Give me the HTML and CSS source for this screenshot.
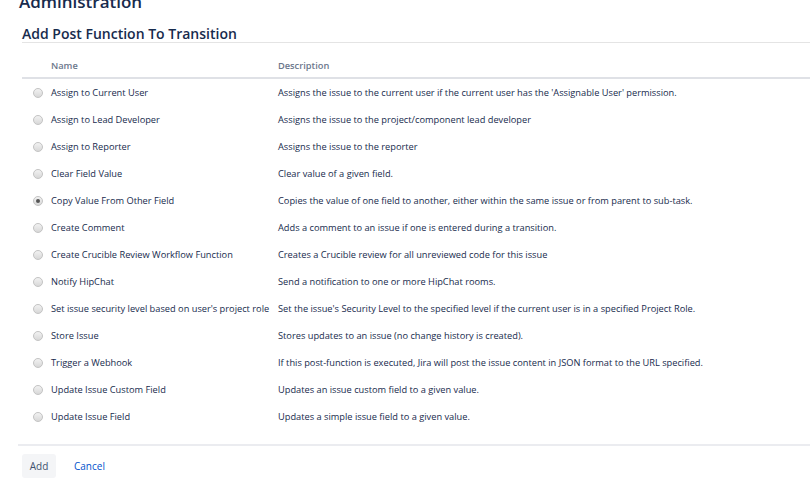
FILE: index.html
```html
<!DOCTYPE html>
<html lang="en">
<head>
    <meta charset="UTF-8">
    <title>Add Post Function To Transition</title>
    <link rel="stylesheet" href="styles.css">
</head>
<body>
    <div class="page">
        <h1 class="page-title">Administration</h1>
        <h2 class="section-title">Add Post Function To Transition</h2>
        <form class="pf-form">
            <table class="pf-table">
                <thead>
                    <tr>
                        <th class="col-radio"></th>
                        <th class="col-name">Name</th>
                        <th class="col-desc">Description</th>
                    </tr>
                </thead>
                <tbody>
                    <tr>
                        <td class="col-radio"><span class="radio"></span></td>
                        <td>Assign to Current User</td>
                        <td>Assigns the issue to the current user if the current user has the 'Assignable User' permission.</td>
                    </tr>
                    <tr>
                        <td class="col-radio"><span class="radio"></span></td>
                        <td>Assign to Lead Developer</td>
                        <td>Assigns the issue to the project/component lead developer</td>
                    </tr>
                    <tr>
                        <td class="col-radio"><span class="radio"></span></td>
                        <td>Assign to Reporter</td>
                        <td>Assigns the issue to the reporter</td>
                    </tr>
                    <tr>
                        <td class="col-radio"><span class="radio"></span></td>
                        <td>Clear Field Value</td>
                        <td>Clear value of a given field.</td>
                    </tr>
                    <tr>
                        <td class="col-radio"><span class="radio checked"></span></td>
                        <td>Copy Value From Other Field</td>
                        <td>Copies the value of one field to another, either within the same issue or from parent to sub-task.</td>
                    </tr>
                    <tr>
                        <td class="col-radio"><span class="radio"></span></td>
                        <td>Create Comment</td>
                        <td>Adds a comment to an issue if one is entered during a transition.</td>
                    </tr>
                    <tr>
                        <td class="col-radio"><span class="radio"></span></td>
                        <td>Create Crucible Review Workflow Function</td>
                        <td>Creates a Crucible review for all unreviewed code for this issue</td>
                    </tr>
                    <tr>
                        <td class="col-radio"><span class="radio"></span></td>
                        <td>Notify HipChat</td>
                        <td>Send a notification to one or more HipChat rooms.</td>
                    </tr>
                    <tr>
                        <td class="col-radio"><span class="radio"></span></td>
                        <td>Set issue security level based on user's project role</td>
                        <td>Set the issue's Security Level to the specified level if the current user is in a specified Project Role.</td>
                    </tr>
                    <tr>
                        <td class="col-radio"><span class="radio"></span></td>
                        <td>Store Issue</td>
                        <td>Stores updates to an issue (no change history is created).</td>
                    </tr>
                    <tr>
                        <td class="col-radio"><span class="radio"></span></td>
                        <td>Trigger a Webhook</td>
                        <td>If this post-function is executed, Jira will post the issue content in JSON format to the URL specified.</td>
                    </tr>
                    <tr>
                        <td class="col-radio"><span class="radio"></span></td>
                        <td>Update Issue Custom Field</td>
                        <td>Updates an issue custom field to a given value.</td>
                    </tr>
                    <tr>
                        <td class="col-radio"><span class="radio"></span></td>
                        <td>Update Issue Field</td>
                        <td>Updates a simple issue field to a given value.</td>
                    </tr>
                </tbody>
            </table>
            <div class="buttons">
                <button type="button" class="btn btn-add">Add</button>
                <a class="btn-cancel" href="#">Cancel</a>
            </div>
        </form>
    </div>
</body>
</html>
```

FILE: styles.css
```css
body {
    margin: 0;
    background: #ffffff;
    font-family: 'Open Sans', sans-serif;
    color: #172b4d;
    overflow: hidden;
}
.page {
    margin-top: -8px;
    padding-left: 18px;
}
.page-title {
    margin: 0 0 0 1px;
    font-size: 17px;
    font-weight: 600;
    line-height: 20px;
    color: #172b4d;
}
.section-title {
    margin: 14px 0 0 4px;
    padding-bottom: 0;
    font-size: 14px;
    font-weight: 600;
    line-height: 16px;
    color: #172b4d;
    border-bottom: 1px solid #e4e4e4;
}
.pf-form {
    margin-top: 11px;
}
.pf-table {
    width: calc(100% - 4px);
    margin-left: 4px;
    border-collapse: collapse;
    font-size: 9.25px;
}
.pf-table th {
    text-align: left;
    font-weight: 600;
    color: #6b778c;
    padding: 6px 0 5px 0;
    line-height: 12px;
    border-bottom: 2px solid #dfe1e6;
}
.pf-table td {
    height: 27px;
    padding: 0;
    color: #172b4d;
    white-space: nowrap;
}
.col-radio {
    width: 29px;
}
.col-name {
    width: 227px;
}
.radio {
    display: block;
    width: 8px;
    height: 8px;
    margin-left: 11px;
    border: 1px solid #c4c4c4;
    border-radius: 50%;
    background: linear-gradient(#f2f2f2, #d8d8d8);
    position: relative;
}
.radio.checked::after {
    content: "";
    position: absolute;
    left: 2px;
    top: 2px;
    width: 4px;
    height: 4px;
    border-radius: 50%;
    background: #555555;
}
.buttons {
    display: flex;
    align-items: center;
    margin-top: 14px;
    padding-top: 8px;
    border-top: 2px solid #ebecf0;
}
.btn {
    font-family: 'Open Sans', sans-serif;
    font-size: 10px;
    border: none;
    border-radius: 3px;
    cursor: pointer;
}
.btn-add {
    margin-left: 4px;
    width: 34px;
    height: 24px;
    background: #f4f5f7;
    color: #42526e;
}
.btn-cancel {
    margin-left: 18px;
    font-size: 10px;
    color: #0052cc;
    text-decoration: none;
}
```
